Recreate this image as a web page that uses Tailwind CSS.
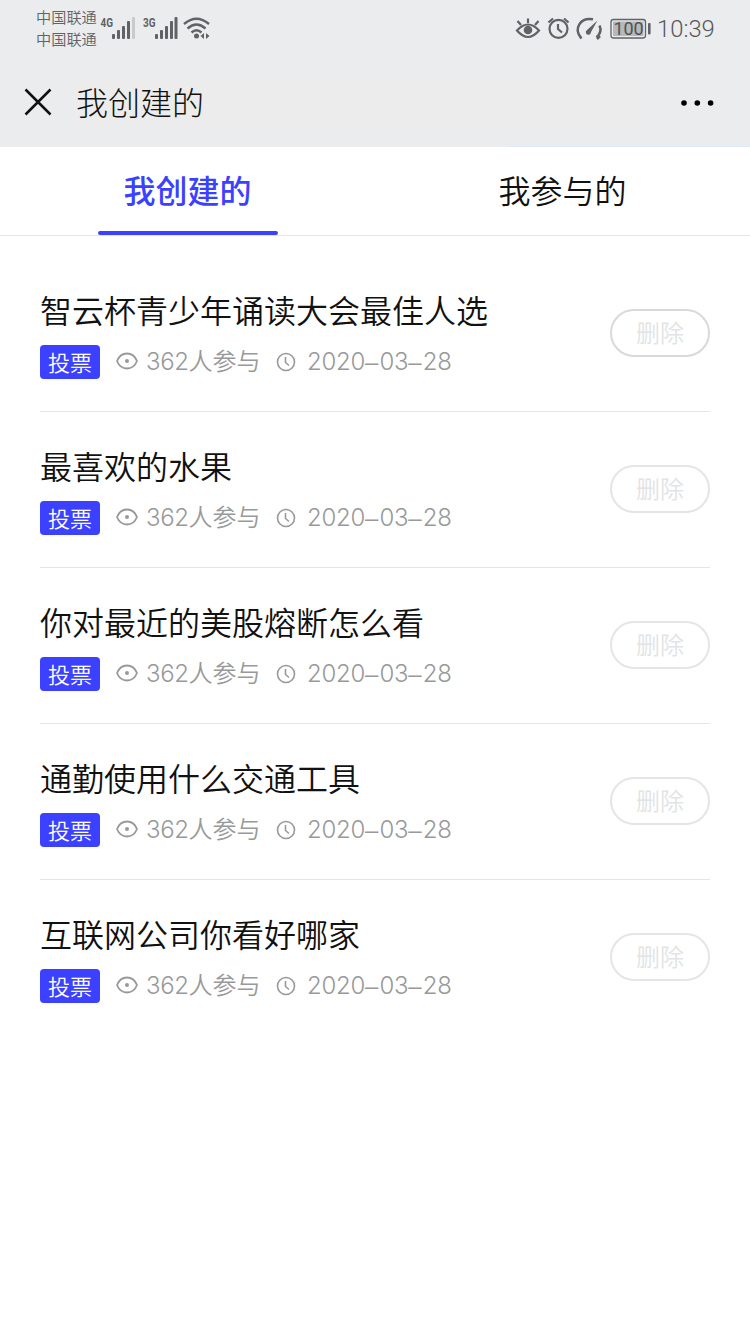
<!DOCTYPE html>
<html lang="zh-CN">
    <head>
        <meta charset="UTF-8" />
        <meta name="viewport" content="width=device-width, initial-scale=1.0" />
        <title>我创建的</title>
        <script src="https://cdn.jsdelivr.net/npm/@tailwindcss/browser@4"></script>
    </head>
    <body class="min-h-screen bg-white text-[#111] font-['Inter','Noto_Sans_CJK_SC',sans-serif]">
        <header class="flex h-[147px] flex-col bg-[#ebecee]">
            <!-- status bar -->
            <div class="flex h-[58px] justify-between pl-9 pr-[35px] text-[#56585b]">
                <div class="flex">
                    <div class="w-[62px] pt-[7px] text-[15.2px] leading-[22px] font-[350] whitespace-nowrap text-[#626366]">
                        <p>中国联通</p>
                        <p>中国联通</p>
                    </div>
                    <svg class="ml-[2px] h-[58px] w-[112px]" viewBox="100 0 112 58" fill="#606265">
                        <text x="100.500" y="26.500" font-size="12.500" font-weight="700" font-family="Roboto" textLength="12.500" lengthAdjust="spacingAndGlyphs">4G</text>
                        <rect x="112" y="34" width="3" height="5" rx="1" />
                        <rect x="117" y="30" width="3" height="9" rx="1" />
                        <rect x="122" y="26" width="3" height="13" rx="1" />
                        <rect x="127" y="21" width="3" height="18" rx="1" />
                        <rect x="132" y="17" width="3" height="22" rx="1" fill="#c9cacc" />
                        <text x="143" y="26.500" font-size="12.500" font-weight="700" font-family="Roboto" textLength="12.500" lengthAdjust="spacingAndGlyphs">3G</text>
                        <rect x="155" y="34" width="3" height="5" rx="1" />
                        <rect x="160" y="30" width="3" height="9" rx="1" />
                        <rect x="165" y="26" width="3" height="13" rx="1" />
                        <rect x="170" y="21" width="3" height="18" rx="1" />
                        <rect x="174.500" y="17" width="3" height="22" rx="1" />
                        <g fill="none" stroke="#606265" stroke-width="2.400">
                            <path d="M184 24Q196.500 13.500 209 24" />
                            <path d="M187.500 28.500Q196.500 20.500 205.500 28.500" />
                            <path d="M191.500 32.500Q196.500 28 201.500 32.500" />
                        </g>
                        <circle cx="196.500" cy="36" r="2.500" />
                        <path d="M204 33v6l-3.500-3zM206 33v6l3.500-3z" />
                    </svg>
                </div>
                <div class="flex">
                    <svg class="h-[58px] w-[136px]" viewBox="515 0 136 58" fill="none" stroke="#606265" stroke-width="2.200">
                        <path d="M517 30.500Q528 18.500 539 30.500Q528 43.500 517 30.500zM528 18.500v4.500M517.500 21l3.500 4M538.500 21l-3.500 4" />
                        <circle cx="528" cy="30" r="4.300" fill="#606265" stroke="none" />
                        <circle cx="558.500" cy="28.800" r="9" />
                        <path d="M558 24v5l4 3.500M548.500 22.500l4.500-4M568.500 22.500l-4.500-4" />
                        <path d="M581 37.500C573.500 29 580 17 593 19.300M596.500 37.500Q602.500 32 599.500 25.500M579.500 36l2 2.500M600 36l-3 3" stroke-width="2.500" />
                        <path d="M597.500 20.500L591 32a2.600 2.600 0 1 1-4-2z" fill="#606265" stroke="none" />
                        <rect x="611" y="19.500" width="34.500" height="18.500" rx="2.500" stroke-width="1.300" />
                        <rect x="613" y="21.500" width="30.500" height="14.500" fill="#b7b8ba" stroke="none" />
                        <rect x="648" y="23" width="2.600" height="11.500" rx="1" fill="#606265" stroke="none" />
                        <text x="613.500" y="35" fill="#505255" stroke="none" font-family="Roboto" font-size="18" textLength="30">100</text>
                    </svg>
                    <span class="ml-[6px] w-[58px] font-['Roboto'] text-[23.800px] leading-[58px] font-[350] whitespace-nowrap">10:39</span>
                </div>
            </div>
            <!-- nav bar -->
            <nav class="flex h-[88px] items-center pl-6 pr-9">
                <svg class="size-7" viewBox="0 0 28 28" fill="none" stroke="#111" stroke-width="2.500">
                    <path d="M1.500 1.500l25 25M26.500 1.500l-25 25" />
                </svg>
                <h1 class="ml-[23px] h-[46px] w-[568px] bg-[#ebeceb] pl-[1px] text-[32px] leading-[49px] font-light">我创建的</h1>
                <svg class="ml-auto h-2 w-[33px]" viewBox="0 0 33 8">
                    <circle cx="3" cy="5" r="2.800" />
                    <circle cx="16.300" cy="5" r="2.800" />
                    <circle cx="29.600" cy="5" r="2.800" />
                </svg>
            </nav>
            <div class="ml-[510px] h-px bg-[#dbe8fa]"></div>
        </header>

        <div class="flex h-[89px] border-b border-[#e5e5e5] text-[32px] leading-[90px]">
            <button class="flex w-1/2 flex-col items-center font-medium text-[#3c41ff]">
                <span class="h-[84px]">我创建的</span>
                <span class="h-1 w-[180px] rounded-full bg-[#3c41ff]"></span>
            </button>
            <button class="h-[88px] w-1/2 font-[350]">我参与的</button>
        </div>

        <main id="list" class="px-10 pt-5"></main>

        <script>
            const votes = [
                "智云杯青少年诵读大会最佳人选",
                "最喜欢的水果",
                "你对最近的美股熔断怎么看",
                "通勤使用什么交通工具",
                "互联网公司你看好哪家",
            ];

            const dash = `<span class="font-['Liberation_Sans'] tracking-[1.2px]">–</span>`;
            const date = ["2020", "03", "28"].join(dash);

            document.querySelector("#list").innerHTML = votes
                .map(
                    (title) => `
                <section class="group flex h-[156px] justify-between border-b border-[#e5e5e5] last:border-transparent">
                    <div class="pt-8">
                        <h2 class="text-[32px] leading-[48px] font-[350]">${title}</h2>
                        <div class="mt-[9px] flex h-[34px] items-center text-2xl leading-[34px] font-[350] text-[#999]">
                            <span class="h-[34px] w-[60px] rounded-[4px] bg-[#3c41ff] text-center text-[22px] leading-[36px] text-white">投票</span>
                            <svg class="mb-[2px] ml-4 h-[18px] w-[22px]" viewBox="0 0 22 18" fill="none" stroke="#999" stroke-width="1.800">
                                <path d="M1 9C5 -1 17 -1 21 9C17 19 5 19 1 9z" />
                                <circle cx="11" cy="9" r="2" fill="#999" stroke="none" />
                            </svg>
                            <span class="ml-2 w-[114px] whitespace-nowrap"><span class="font-light tracking-[-0.4px]">362</span>人参与</span>
                            <svg class="ml-4 size-[20px]" viewBox="0 0 20 20" fill="none" stroke="#999" stroke-width="1.600">
                                <circle cx="10" cy="10" r="8.500" />
                                <path d="M9.500 5v5.500l3.500 3" />
                            </svg>
                            <span class="ml-[11px] font-light whitespace-nowrap tracking-[-0.3px]">${date}</span>
                        </div>
                    </div>
                    <button class="mt-[53px] h-12 w-[100px] rounded-full border-2 border-[#e5e5e5] text-2xl leading-[46px] font-[350] text-[#e2e3e5] group-first:border-[#d9d9d9]"><span class="block">删除</span></button>
                </section>`
                )
                .join("");
        </script>
    </body>
</html>
